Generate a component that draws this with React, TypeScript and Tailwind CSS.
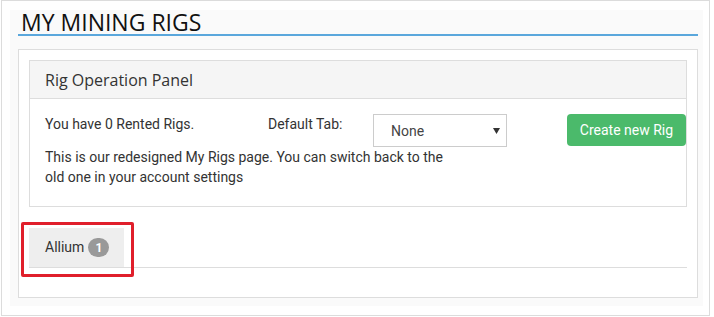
import React from 'react';

const App: React.FC = () => {
  return (
    <div className="w-[714px] h-[317px] bg-white pl-[1px] font-['Roboto',sans-serif] text-[#333]">
      <div className="w-[709px] h-[316px] border border-[#dcdcdc] pl-[8px] pt-[9px]">
        {/* Gray page area */}
        <div className="w-[693px] h-[296px] bg-[#fafafa] pl-[8px]">
          {/* Title */}
          <h1 className="w-[680px] h-[26px] border-b-2 border-[#5aa7dc] pl-[3px] font-['Open_Sans',sans-serif] text-[23px] leading-[24px] text-[#111]">
            MY MINING RIGS
          </h1>

          {/* White content box */}
          <div className="mt-[13px] w-[680px] h-[249px] bg-white border border-[#dddddd] pl-[10px] pt-[10px]">
            {/* Rig Operation Panel */}
            <div className="w-[658px] border border-[#dddddd]">
              <div className="h-[38px] bg-[#f5f5f5] border-b border-[#dddddd] pl-[15px] flex items-center font-['Open_Sans',sans-serif] text-[16px] text-[#333]">
                Rig Operation Panel
              </div>
              <div className="h-[107px] pl-[15px] pt-[15px] flex items-start text-[14px] leading-[20px]">
                <div className="flex flex-col">
                  <div className="flex items-start h-[33px]">
                    <span className="w-[223px]">You have 0 Rented Rigs.</span>
                    <span className="w-[105px]">Default Tab:</span>
                    <div className="w-[134px] h-[33px] border border-[#cccccc] bg-white flex items-center justify-between pl-[17px] pr-[6px] text-[#444]">
                      <span>None</span>
                      <svg width="7" height="6" viewBox="0 0 7 6">
                        <path d="M0 0 L7 0 L3.5 6 Z" fill="#333" />
                      </svg>
                    </div>
                  </div>
                  <p className="w-[410px]">
                    This is our redesigned My Rigs page. You can switch back to the old one in your account settings
                  </p>
                </div>
                <button className="ml-auto w-[119px] h-[32px] rounded-[4px] bg-[#4bba6b] text-white text-[14px] flex items-center justify-center">
                  Create new Rig
                </button>
              </div>
            </div>

            {/* Tabs */}
            <div className="relative mt-[21px] w-[658px] border-b border-[#dddddd]">
              <div className="w-[95px] h-[39px] bg-[#eeeeee] pl-[16px] flex items-center gap-[4px] text-[14px] text-[#333]">
                <span>Allium</span>
                <span className="h-[19px] min-w-[21px] px-[6px] rounded-full bg-[#999999] text-white text-[12px] font-bold flex items-center justify-center">
                  1
                </span>
              </div>
              {/* highlight annotation */}
              <div className="absolute -left-[8px] -top-[6px] w-[113px] h-[55px] border-[3px] border-[#e01f2b] rounded-[2px]" />
            </div>
          </div>
        </div>
      </div>
    </div>
  );
};

export default App;
